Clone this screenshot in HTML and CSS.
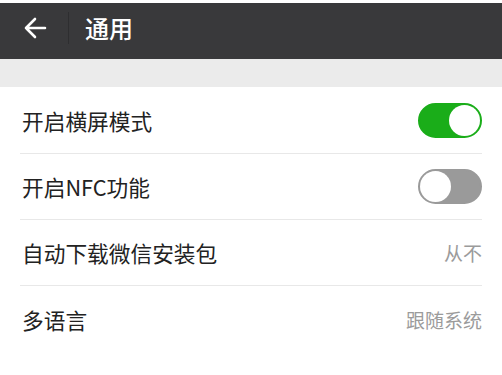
FILE: index.html
```html
<!DOCTYPE html>
<html lang="zh">
<head>
<meta charset="utf-8">
<link rel="stylesheet" href="styles.css">
</head>
<body>
<div class="topgap"></div>
<header class="bar">
  <svg class="back" width="24" height="22" viewBox="0 0 24 22">
    <path d="M22 11H3M12 2L3 11l9 9" fill="none" stroke="#fff" stroke-width="2.6" stroke-linecap="round" stroke-linejoin="round"/>
  </svg>
  <div class="divider"></div>
  <div class="title">通用</div>
</header>
<div class="gap"></div>
<ul class="list">
  <li class="row"><span class="label">开启横屏模式</span><span class="switch on"><span class="knob"></span></span></li>
  <li class="row"><span class="label">开启NFC功能</span><span class="switch off"><span class="knob"></span></span></li>
  <li class="row"><span class="label">自动下载微信安装包</span><span class="value">从不</span></li>
  <li class="row last"><span class="label">多语言</span><span class="value">跟随系统</span></li>
</ul>
</body>
</html>
```
FILE: styles.css
```css
html, body {
  margin: 0;
  padding: 0;
  background: #fff;
  font-family: "Noto Sans CJK SC", "Noto Sans", sans-serif;
}
.topgap {
  height: 3px;
  background: #fff;
}
.bar {
  height: 56px;
  background: #39393b;
  display: flex;
  align-items: center;
  padding-left: 23px;
}
.back {
  display: block;
  margin-top: -6px;
}
.divider {
  width: 1px;
  height: 32px;
  background: #2e2e30;
  margin-left: 21px;
  margin-top: -6px;
}
.title {
  color: #fff;
  font-size: 24px;
  font-weight: 500;
  margin-left: 16px;
  margin-top: -8px;
}
.gap {
  height: 28px;
  background: #ebebeb;
}
.list {
  list-style: none;
  margin: 0;
  padding: 0 20px 0 20px;
}
.row {
  height: 66px;
  display: flex;
  align-items: center;
  justify-content: space-between;
  border-bottom: 1px solid #e8e8e8;
  box-sizing: border-box;
}
.row:first-child {
  height: 67px;
}
.row.last {
  border-bottom: none;
}
.label {
  font-size: 21.7px;
  color: #222;
  margin-left: 2px;
}
.value {
  font-size: 19px;
  color: #9b9b9b;
}
.switch {
  width: 64px;
  height: 35px;
  border-radius: 18px;
  box-sizing: border-box;
  display: flex;
  align-items: center;
}
.switch.on {
  background: #1aad19;
  border: 2px solid #1aad19;
  justify-content: flex-end;
}
.switch.off {
  background: #9a9a9a;
  border: 2px solid #9a9a9a;
  justify-content: flex-start;
}
.knob {
  width: 31px;
  height: 31px;
  border-radius: 50%;
  background: #fff;
}
```
